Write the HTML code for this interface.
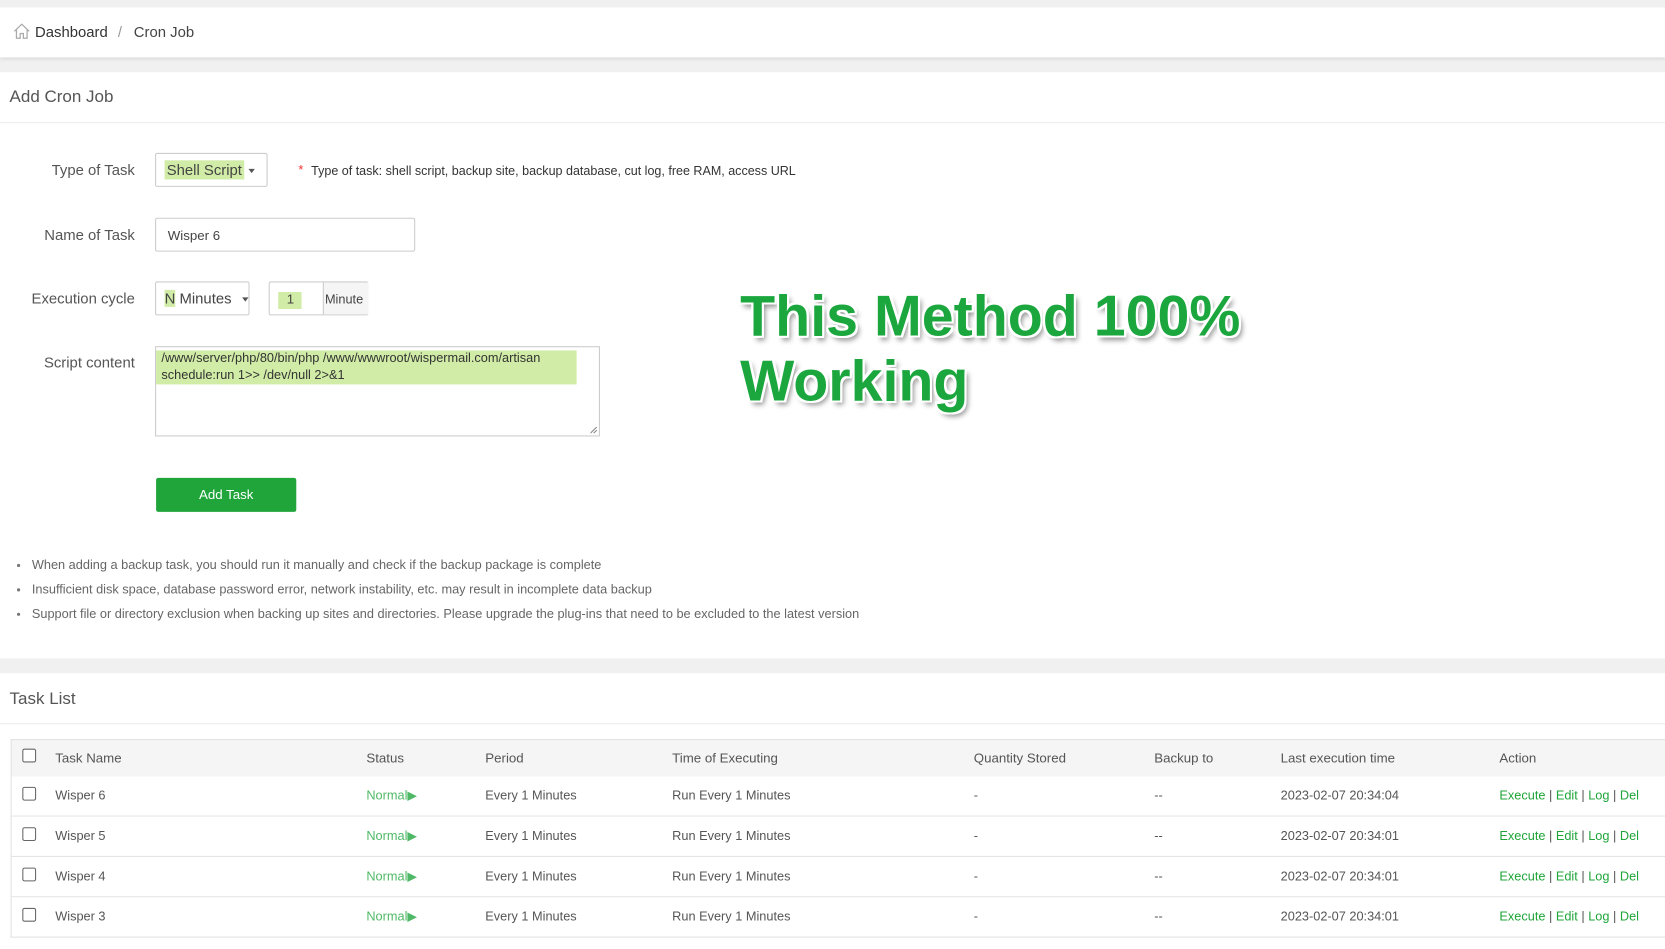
<!DOCTYPE html>
<html><head><meta charset="utf-8"><style>
html,body{margin:0;padding:0;width:1665px;height:926px;overflow:hidden;background:#f0f0f0}
#w{position:absolute;left:0;top:0;width:1568px;height:872px;transform:scale(1.0619);transform-origin:0 0;font-family:"Liberation Sans",sans-serif;color:#555;}
.a{position:absolute;white-space:nowrap}
.card{position:absolute;left:0;width:1568px;background:#fff}
.lbl{position:absolute;right:1441px;font-size:14px;color:#555}
.box{position:absolute;border:1px solid #ccc;border-radius:2px;background:#fff;box-sizing:border-box}
.hl{background:#d0eca6}
.caret{display:block;width:0;height:0;border-left:3px solid transparent;border-right:3px solid transparent;border-top:4px solid #555}
.row{position:absolute;left:10px;width:1558px;height:37px;border-bottom:1px solid #e2e2e2;font-size:12px;color:#555;background:#fff}
.row span{position:absolute;top:11px;white-space:nowrap}
.cb{position:absolute;left:10px;top:10px;width:11px;height:11px;border:1px solid #666;border-radius:2px;background:#fff}
.g{color:#20a53a;font-weight:normal}
.li{position:absolute;left:16px;font-size:12px;color:#666;white-space:nowrap}
.li:before{content:"";position:absolute;left:0;top:6px;width:3px;height:3px;border-radius:2px;background:#777}
.li b{font-weight:normal;margin-left:14px}
.big{position:absolute;left:697px;font:bold 54px "Liberation Sans",Arial,sans-serif;color:#1ba73e;text-shadow:-2px -2px 0 #fff,2px -2px 0 #fff,-2px 2px 0 #fff,2px 2px 0 #fff,0 2px 0 #fff,0 -2px 0 #fff,2px 0 0 #fff,-2px 0 0 #fff,3px 4px 5px rgba(0,0,0,.45);white-space:nowrap}
</style></head><body><div id="w">
<div class="card" style="top:7px;height:47px;box-shadow:0 2px 3px rgba(0,0,0,.08)">
  <svg class="a" style="left:12px;top:14px" width="17" height="16" viewBox="0 0 17 16"><path d="M1.5 8.5 L8.5 1.8 L15.5 8.5 M3.5 7 V15 H7 V10.5 H10 V15 H13.5 V7" fill="none" stroke="#aaa" stroke-width="1.2"/></svg>
  <span class="a" style="left:33px;top:15px;font-size:14px;color:#333">Dashboard</span>
  <span class="a" style="left:111px;top:15px;font-size:14px;color:#999">/</span>
  <span class="a" style="left:126px;top:15px;font-size:14px;color:#444">Cron Job</span>
</div>
<div class="card" style="top:68px;height:552px">
  <span class="a" style="left:9px;top:15px;font-size:16px;color:#555">Add Cron Job</span>
  <div class="a" style="left:0;top:47px;width:1568px;height:1px;background:#ececec"></div>
</div>
<div class="lbl" style="top:152px">Type of Task</div>
<div class="box" style="left:146px;top:144px;width:106px;height:32px"><span class="a hl" style="left:8px;top:6px;font-size:14px;color:#444;padding:1px 2px">Shell Script</span><span class="a" style="left:87px;top:14px"><i class="caret"></i></span></div>
<span class="a" style="left:281px;top:153px;font-size:12px;color:#e33">*</span>
<span class="a" style="left:293px;top:154px;font-size:11.8px;color:#333">Type of task: shell script, backup site, backup database, cut log, free RAM, access URL</span>
<div class="lbl" style="top:213px">Name of Task</div>
<div class="box" style="left:146px;top:205px;width:245px;height:32px"><span class="a" style="left:11px;top:9px;font-size:12.5px;color:#444">Wisper 6</span></div>
<div class="lbl" style="top:273px">Execution cycle</div>
<div class="box" style="left:146px;top:265px;width:89px;height:32px"><span class="a" style="left:8px;top:7px;font-size:14px;color:#444"><span class="hl">N</span> Minutes</span><span class="a" style="left:81px;top:14px"><i class="caret"></i></span></div>
<div class="box" style="left:253px;top:265px;width:94px;height:32px"><span class="a hl" style="left:8px;top:9px;width:22px;height:16px"></span><span class="a" style="left:16px;top:9px;font-size:12.5px;color:#444">1</span><div class="a" style="left:50px;top:0;width:42px;height:30px;background:#f5f5f5;border-left:1px solid #ccc"></div><span class="a" style="left:52px;top:9px;font-size:12px;color:#444">Minute</span></div>
<div class="lbl" style="top:333px">Script content</div>
<div class="box" style="left:146px;top:326px;width:419px;height:85px;border-radius:0"><div class="a hl" style="left:0;top:3px;width:396px;height:32px"></div><span class="a" style="left:5px;top:3px;font-size:12px;line-height:15.5px;color:#333">/www/server/php/80/bin/php /www/wwwroot/wispermail.com/artisan<br>schedule:run 1>> /dev/null 2>&amp;1</span>
<svg class="a" style="right:1px;bottom:1px" width="7" height="7"><path d="M6 0L0 6M6 3L3 6" stroke="#888" stroke-width="1"/></svg></div>
<div class="a" style="left:147px;top:450px;width:132px;height:32px;background:#20a53a;border-radius:2px;color:#fff;font-size:12.5px;text-align:center;line-height:32px">Add Task</div>
<div class="li" style="top:525px"><b>When adding a backup task, you should run it manually and check if the backup package is complete</b></div>
<div class="li" style="top:548px"><b>Insufficient disk space, database password error, network instability, etc. may result in incomplete data backup</b></div>
<div class="li" style="top:571px"><b>Support file or directory exclusion when backing up sites and directories. Please upgrade the plug-ins that need to be excluded to the latest version</b></div>
<div class="big" style="top:267px">This Method 100%</div>
<div class="big" style="top:328px">Working</div>
<div class="card" style="top:634px;height:260px">
  <span class="a" style="left:9px;top:16px;font-size:16px;color:#555">Task List</span>
  <div class="a" style="left:0;top:47px;width:1568px;height:1px;background:#ececec"></div>
</div>
<div class="row" style="top:696px;height:34px;background:#f5f5f5;border-top:1px solid #e2e2e2;border-left:1px solid #e2e2e2;font-size:12.5px">
<i class="cb" style="top:8px"></i><span style="left:41px;top:10px">Task Name</span><span style="left:334px;top:10px">Status</span><span style="left:446px;top:10px">Period</span><span style="left:622px;top:10px">Time of Executing</span><span style="left:906px;top:10px">Quantity Stored</span><span style="left:1076px;top:10px">Backup to</span><span style="left:1195px;top:10px">Last execution time</span><span style="left:1401px;top:10px">Action</span></div>
<div class="row" style="top:731px;border-left:1px solid #e2e2e2"><i class="cb"></i><span style="left:41px">Wisper 6</span><span style="left:334px;color:#4fb866">Normal▶</span><span style="left:446px">Every 1 Minutes</span><span style="left:622px">Run Every 1 Minutes</span><span style="left:906px">-</span><span style="left:1076px">--</span><span style="left:1195px">2023-02-07 20:34:04</span><span style="left:1401px"><b class="g">Execute</b> | <b class="g">Edit</b> | <b class="g">Log</b> | <b class="g">Del</b></span></div>
<div class="row" style="top:769px;border-left:1px solid #e2e2e2"><i class="cb"></i><span style="left:41px">Wisper 5</span><span style="left:334px;color:#4fb866">Normal▶</span><span style="left:446px">Every 1 Minutes</span><span style="left:622px">Run Every 1 Minutes</span><span style="left:906px">-</span><span style="left:1076px">--</span><span style="left:1195px">2023-02-07 20:34:01</span><span style="left:1401px"><b class="g">Execute</b> | <b class="g">Edit</b> | <b class="g">Log</b> | <b class="g">Del</b></span></div>
<div class="row" style="top:807px;border-left:1px solid #e2e2e2"><i class="cb"></i><span style="left:41px">Wisper 4</span><span style="left:334px;color:#4fb866">Normal▶</span><span style="left:446px">Every 1 Minutes</span><span style="left:622px">Run Every 1 Minutes</span><span style="left:906px">-</span><span style="left:1076px">--</span><span style="left:1195px">2023-02-07 20:34:01</span><span style="left:1401px"><b class="g">Execute</b> | <b class="g">Edit</b> | <b class="g">Log</b> | <b class="g">Del</b></span></div>
<div class="row" style="top:845px;border-left:1px solid #e2e2e2"><i class="cb"></i><span style="left:41px">Wisper 3</span><span style="left:334px;color:#4fb866">Normal▶</span><span style="left:446px">Every 1 Minutes</span><span style="left:622px">Run Every 1 Minutes</span><span style="left:906px">-</span><span style="left:1076px">--</span><span style="left:1195px">2023-02-07 20:34:01</span><span style="left:1401px"><b class="g">Execute</b> | <b class="g">Edit</b> | <b class="g">Log</b> | <b class="g">Del</b></span></div>
</div></body></html>
